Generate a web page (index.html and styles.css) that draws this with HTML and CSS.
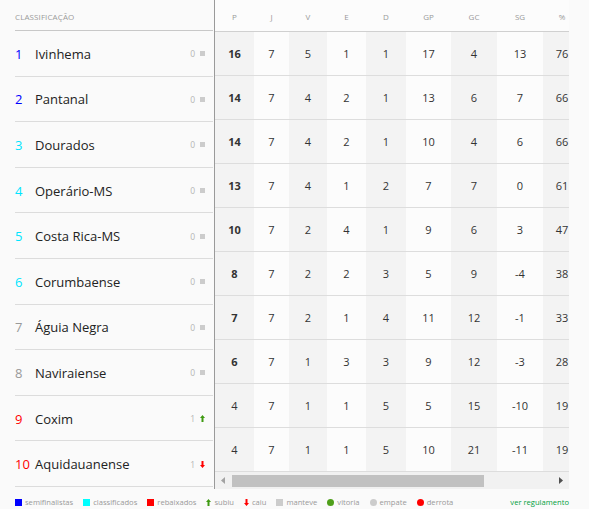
FILE: index.html
```html
<!DOCTYPE html>
<html lang="pt">
<head>
<meta charset="utf-8">
<title>Classificação</title>
<link rel="stylesheet" href="styles.css">
</head>
<body>
<div class="standings">
  <div class="left">
    <div class="left-head">CLASSIFICAÇÃO</div>
    <div class="team"><span class="pos c-blue">1</span><span class="name">Ivinhema</span><span class="var">0</span><span class="ico sq"></span></div>
    <div class="team"><span class="pos c-blue">2</span><span class="name">Pantanal</span><span class="var">0</span><span class="ico sq"></span></div>
    <div class="team"><span class="pos c-cyan">3</span><span class="name">Dourados</span><span class="var">0</span><span class="ico sq"></span></div>
    <div class="team"><span class="pos c-cyan">4</span><span class="name">Operário-MS</span><span class="var">0</span><span class="ico sq"></span></div>
    <div class="team"><span class="pos c-cyan">5</span><span class="name">Costa Rica-MS</span><span class="var">0</span><span class="ico sq"></span></div>
    <div class="team"><span class="pos c-cyan">6</span><span class="name">Corumbaense</span><span class="var">0</span><span class="ico sq"></span></div>
    <div class="team"><span class="pos c-gray">7</span><span class="name">Águia Negra</span><span class="var">0</span><span class="ico sq"></span></div>
    <div class="team"><span class="pos c-gray">8</span><span class="name">Naviraiense</span><span class="var">0</span><span class="ico sq"></span></div>
    <div class="team"><span class="pos c-red">9</span><span class="name">Coxim</span><span class="var">1</span><svg class="ico arrow" viewBox="0 0 5 7"><polygon points="2.5,0 5,3 3.5,3 3.5,7 1.5,7 1.5,3 0,3" fill="#3f9a12"/></svg></div>
    <div class="team"><span class="pos c-red">10</span><span class="name">Aquidauanense</span><span class="var">1</span><svg class="ico arrow" viewBox="0 0 5 7"><polygon points="1.5,0 3.5,0 3.5,4 5,4 2.5,7 0,4 1.5,4" fill="#ff0000"/></svg></div>
  </div>
  <div class="right">
    <div class="clip">
      <table class="stats">
        <colgroup>
          <col class="w39"><col class="w35"><col class="w38"><col class="w39"><col class="w40"><col class="w45"><col class="w46"><col class="w46"><col class="w38">
        </colgroup>
        <thead>
          <tr><th>P</th><th>J</th><th>V</th><th>E</th><th>D</th><th>GP</th><th>GC</th><th>SG</th><th>%</th></tr>
        </thead>
        <tbody>
          <tr><td class="pts">16</td><td>7</td><td>5</td><td>1</td><td>1</td><td>17</td><td>4</td><td>13</td><td>76</td></tr>
          <tr><td class="pts">14</td><td>7</td><td>4</td><td>2</td><td>1</td><td>13</td><td>6</td><td>7</td><td>66</td></tr>
          <tr><td class="pts">14</td><td>7</td><td>4</td><td>2</td><td>1</td><td>10</td><td>4</td><td>6</td><td>66</td></tr>
          <tr><td class="pts">13</td><td>7</td><td>4</td><td>1</td><td>2</td><td>7</td><td>7</td><td>0</td><td>61</td></tr>
          <tr><td class="pts">10</td><td>7</td><td>2</td><td>4</td><td>1</td><td>9</td><td>6</td><td>3</td><td>47</td></tr>
          <tr><td class="pts">8</td><td>7</td><td>2</td><td>2</td><td>3</td><td>5</td><td>9</td><td>-4</td><td>38</td></tr>
          <tr><td class="pts">7</td><td>7</td><td>2</td><td>1</td><td>4</td><td>11</td><td>12</td><td>-1</td><td>33</td></tr>
          <tr><td class="pts">6</td><td>7</td><td>1</td><td>3</td><td>3</td><td>9</td><td>12</td><td>-3</td><td>28</td></tr>
          <tr><td>4</td><td>7</td><td>1</td><td>1</td><td>5</td><td>5</td><td>15</td><td>-10</td><td>19</td></tr>
          <tr><td>4</td><td>7</td><td>1</td><td>1</td><td>5</td><td>10</td><td>21</td><td>-11</td><td>19</td></tr>
        </tbody>
      </table>
    </div>
    <div class="scrollbar">
      <svg class="sb-arrow" viewBox="0 0 4 7"><polygon points="4,0 4,7 0,3.5" fill="#a3a3a3"/></svg>
      <div class="sb-track"><div class="sb-thumb"></div></div>
      <svg class="sb-arrow" viewBox="0 0 4 7"><polygon points="0,0 0,7 4,3.5" fill="#505050"/></svg>
    </div>
  </div>
</div>
<div class="legend">
  <div class="legend-items">
    <span class="lg"><span class="lg-sq bg-blue"></span>semifinalistas</span>
    <span class="lg"><span class="lg-sq bg-cyan"></span>classificados</span>
    <span class="lg"><span class="lg-sq bg-red"></span>rebaixados</span>
    <span class="lg"><svg class="lg-arrow" viewBox="0 0 5 7"><polygon points="2.5,0 5,3 3.5,3 3.5,7 1.5,7 1.5,3 0,3" fill="#3f9a12"/></svg>subiu</span>
    <span class="lg"><svg class="lg-arrow" viewBox="0 0 5 7"><polygon points="1.5,0 3.5,0 3.5,4 5,4 2.5,7 0,4 1.5,4" fill="#ff0000"/></svg>caiu</span>
    <span class="lg"><span class="lg-sq bg-lgray"></span>manteve</span>
    <span class="lg"><span class="lg-dot bg-green"></span>vitoria</span>
    <span class="lg"><span class="lg-dot bg-lgray"></span>empate</span>
    <span class="lg"><span class="lg-dot bg-red"></span>derrota</span>
  </div>
  <a class="rules" href="#">ver regulamento</a>
</div>
</body>
</html>
```
FILE: styles.css
```css
* { box-sizing: border-box; }
html, body { margin: 0; padding: 0; }
body {
  background: #fafafa;
  font-family: "Open Sans", "DejaVu Sans", sans-serif;
  color: #222;
  padding: 0 20px 0 15px;
  width: 589px;
}
.standings {
  display: flex;
  width: 554px;
}
.left {
  width: 200px;
  border-right: 1px solid #9a9a9a;
}
.left-head {
  height: 31px;
  border-bottom: 1px solid #c8c8c8;
  margin-right: 1px;
  font-size: 8px;
  color: #9a9a9a;
  display: flex;
  align-items: center;
  padding-top: 2px;
  letter-spacing: 0.1px;
}
.team {
  height: 45.6px;
  border-bottom: 1px solid #dcdcdc;
  margin-right: 1px;
  display: flex;
  align-items: center;
  padding-right: 8px;
  padding-top: 1px;
}
.pos {
  width: 20px;
  font-size: 13px;
}
.name {
  flex: 1;
  font-size: 13px;
  color: #222;
}
.var {
  font-size: 8.5px;
  color: #b5b5b5;
  margin-right: 5px;
}
.ico { width: 5px; display: block; }
.sq { height: 5px; background: #cccccc; }
.arrow { height: 7px; }
.c-blue { color: #0000ff; }
.c-cyan { color: #00e5ff; }
.c-gray { color: #999999; }
.c-red { color: #ff0000; }

.right {
  width: 354px;
}
.clip {
  width: 354px;
  overflow: hidden;
}
.stats {
  border-collapse: collapse;
  table-layout: fixed;
  width: 366px;
  font-size: 11px;
  color: #333;
}
.w35 { width: 35px; }
.w38 { width: 38px; }
.w39 { width: 39px; }
.w40 { width: 40px; }
.w45 { width: 45px; }
.w46 { width: 46px; }
.stats th {
  height: 31px;
  border-bottom: 1px solid #d0d0d0;
  font-size: 8px;
  font-weight: normal;
  color: #9a9a9a;
  text-align: center;
  padding: 2px 0 0;
  background: #fcfcfc;
}
.stats td {
  height: 44px;
  border-bottom: 1px solid #dddddd;
  text-align: center;
  padding: 0;
  background: #fcfcfc;
}
.stats td:nth-child(odd) { background: #f3f3f3; }
.stats td.pts { font-weight: bold; }

.scrollbar {
  height: 17px;
  background: #f1f1f1;
  display: flex;
  align-items: center;
}
.sb-arrow { width: 4px; height: 7px; margin: 0 6px; display: block; }
.sb-track {
  flex: 1;
  height: 17px;
  padding: 3px 0 2px;
  display: flex;
}
.sb-thumb {
  width: 252px;
  margin-left: 1px;
  background: #c1c1c1;
}

.legend {
  display: flex;
  align-items: center;
  justify-content: space-between;
  height: 27px;
  width: 554px;
  font-size: 7.6px;
  color: #999;
}
.legend-items { display: flex; align-items: center; gap: 10px; }
.lg { display: flex; align-items: center; gap: 3px; }
.lg-sq { width: 7px; height: 7px; display: block; }
.lg-dot { width: 7px; height: 7px; border-radius: 50%; display: block; }
.lg-arrow { width: 5px; height: 7px; display: block; }
.bg-blue { background: #0000ff; }
.bg-cyan { background: #00ffff; }
.bg-red { background: #ff0000; }
.bg-lgray { background: #cccccc; }
.bg-green { background: #4f9f1a; }
.rules {
  color: #00a040;
  text-decoration: none;
}
```
